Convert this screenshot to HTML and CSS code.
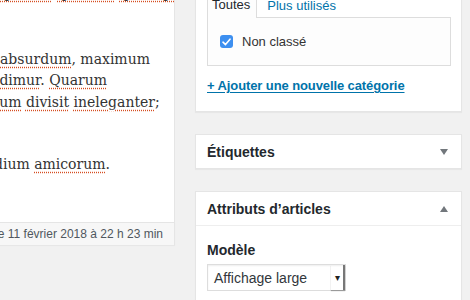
FILE: index.html
```html
<!DOCTYPE html>
<html lang="fr">
<head>
    <meta charset="UTF-8">
    <title>Modifier l’article</title>
    <link rel="stylesheet" href="styles.css">
</head>
<body>
    <div id="wrap">
        <div id="editor-col">
            <div id="editor">
                <p class="para top">
                    <span class="line"><span class="sp">ipsum),</span> <span class="sp">quidem,</span> <span class="sp">quamquam</span></span>
                </p>
                <p class="para">
                    <span class="line"><span class="sp">absurdum</span>, maximum</span>
                    <span class="line l2">au<span class="sp">dimur</span>. <span class="sp">Quarum</span></span>
                    <span class="line l3">Epicur<span class="sp">um</span> <span class="sp">divisit</span> <span class="sp">ineleganter</span>;</span>
                </p>
                <p class="para">
                    <span class="line l4">praesidium <span class="sp">amicorum</span>.</span>
                </p>
            </div>
            <div id="status-info">
                <span>Dernière modification par admin, le 11 février 2018 à 22 h 23 min</span>
            </div>
        </div>

        <div id="sidebar">
            <div class="postbox categories">
                <ul class="category-tabs">
                    <li class="tab active">Toutes</li>
                    <li class="tab"><a href="#">Plus utilisés</a></li>
                </ul>
                <div class="tabs-panel">
                    <label class="cat-item">
                        <span class="checkbox">
                            <svg width="9" height="8" viewBox="0 0 9 8"><path d="M1 4.2 L3.5 6.6 L8 1.2" fill="none" stroke="#fff" stroke-width="1.6" stroke-linecap="round" stroke-linejoin="round"/></svg>
                        </span>
                        Non classé
                    </label>
                </div>
                <a href="#" class="add-cat">+ Ajouter une nouvelle catégorie</a>
            </div>

            <div class="postbox">
                <div class="hndle">
                    <h2>Étiquettes</h2>
                    <svg class="toggle" width="8" height="6" viewBox="0 0 8 6"><path d="M0 0 H8 L4 6 Z" fill="#72777c"/></svg>
                </div>
            </div>

            <div class="postbox">
                <div class="hndle open">
                    <h2>Attributs d’articles</h2>
                    <svg class="toggle" width="8" height="6" viewBox="0 0 8 6"><path d="M0 6 H8 L4 0 Z" fill="#72777c"/></svg>
                </div>
                <div class="inside">
                    <p class="label">Modèle</p>
                    <div class="select">
                        <span>Affichage large</span>
                        <span class="select-btn">&#9662;</span>
                    </div>
                </div>
            </div>
        </div>
    </div>
</body>
</html>
```

FILE: styles.css
```css
body {
    margin: 0;
    padding: 0;
    background-color: #f1f1f1;
    font-family: "Liberation Sans", Arial, sans-serif;
    color: #23282d;
    overflow: hidden;
}
#wrap {
    display: flex;
    align-items: flex-start;
    gap: 20px;
    width: 470px;
    height: 300px;
}

/* editor */
#editor-col {
    width: 175px;
    flex-shrink: 0;
}
#editor {
    height: 222px;
    background-color: #fff;
    border-right: 1px solid #e5e5e5;
    overflow: hidden;
    font-family: "DejaVu Serif", Georgia, serif;
    font-size: 14px;
    line-height: 21.5px;
    color: #333;
}
.para {
    margin: 0 0 41px 0;
}
.para.top {
    margin-top: -17px;
    margin-bottom: 44px;
}
.line {
    display: block;
    white-space: nowrap;
}
.l2 {
    text-indent: -18px;
}
.l3 {
    text-indent: -48px;
}
.l4 {
    text-indent: -50px;
}
.sp {
    text-decoration: underline dotted #d54e21;
    text-underline-offset: 3px;
}
#status-info {
    height: 22px;
    display: flex;
    justify-content: flex-end;
    align-items: center;
    padding-right: 11px;
    background-color: #f7f7f7;
    border-top: 1px solid #e5e5e5;
    border-right: 1px solid #e5e5e5;
    box-shadow: 0 1px 1px rgba(0,0,0,0.04);
    overflow: hidden;
    font-size: 12px;
    color: #50575e;
    white-space: nowrap;
}

/* sidebar */
#sidebar {
    width: 267px;
    flex-shrink: 0;
    display: flex;
    flex-direction: column;
    gap: 22px;
}
.postbox {
    background-color: #fff;
    border: 1px solid #e5e5e5;
    box-shadow: 0 1px 1px rgba(0,0,0,0.04);
}
.categories {
    border-top: none;
    padding: 0 10px 17px 11px;
    margin-top: -4px;
}
.category-tabs {
    list-style-type: none;
    margin: 0;
    padding: 0;
    display: flex;
    font-size: 13px;
}
.tab {
    padding: 1px 5px 4px 4px;
    border: 1px solid transparent;
    border-bottom: none;
}
.tab.active {
    border-color: #ddd;
    border-top: none;
    background-color: #fdfdfd;
    margin-bottom: -1px;
    padding-right: 6px;
}
.tab a {
    color: #0073aa;
    text-decoration: none;
    padding-left: 5px;
}
.tabs-panel {
    height: 47px;
    border: 1px solid #ddd;
    background-color: #fdfdfd;
    padding: 0 12px;
    display: flex;
    align-items: center;
}
.cat-item {
    display: flex;
    align-items: center;
    gap: 9px;
    font-size: 13px;
    color: #333;
}
.checkbox {
    width: 13px;
    height: 13px;
    border-radius: 3px;
    background-color: #3d8ff0;
    display: flex;
    align-items: center;
    justify-content: center;
}
.add-cat {
    display: inline-block;
    margin-top: 12px;
    font-size: 13px;
    font-weight: bold;
    color: #0073aa;
    text-decoration: underline;
    text-underline-offset: 2px;
    letter-spacing: -0.1px;
}
.hndle {
    height: 33px;
    display: flex;
    align-items: center;
    justify-content: space-between;
    padding: 0 13px 0 11px;
}
.hndle.open {
    border-bottom: 1px solid #eee;
}
.hndle h2 {
    margin: 0;
    font-size: 14px;
    font-weight: bold;
    color: #23282d;
}
.toggle {
    display: block;
}
.inside {
    padding: 16px 11px 12px;
}
.label {
    margin: 0 0 6px 0;
    font-size: 14px;
    font-weight: bold;
    color: #23282d;
}
.select {
    width: 139px;
    height: 27px;
    border: 1px solid #ddd;
    box-shadow: inset 0 1px 2px rgba(0,0,0,0.07);
    display: flex;
    align-items: center;
    justify-content: space-between;
    font-size: 14px;
    color: #32373c;
    padding-left: 6px;
    box-sizing: border-box;
}
.select-btn {
    width: 12px;
    height: 25px;
    display: flex;
    align-items: center;
    justify-content: center;
    font-size: 10px;
    color: #222;
    border-right: 2px solid #777;
    box-shadow: 0 1px 1px rgba(0,0,0,0.3);
}
```
